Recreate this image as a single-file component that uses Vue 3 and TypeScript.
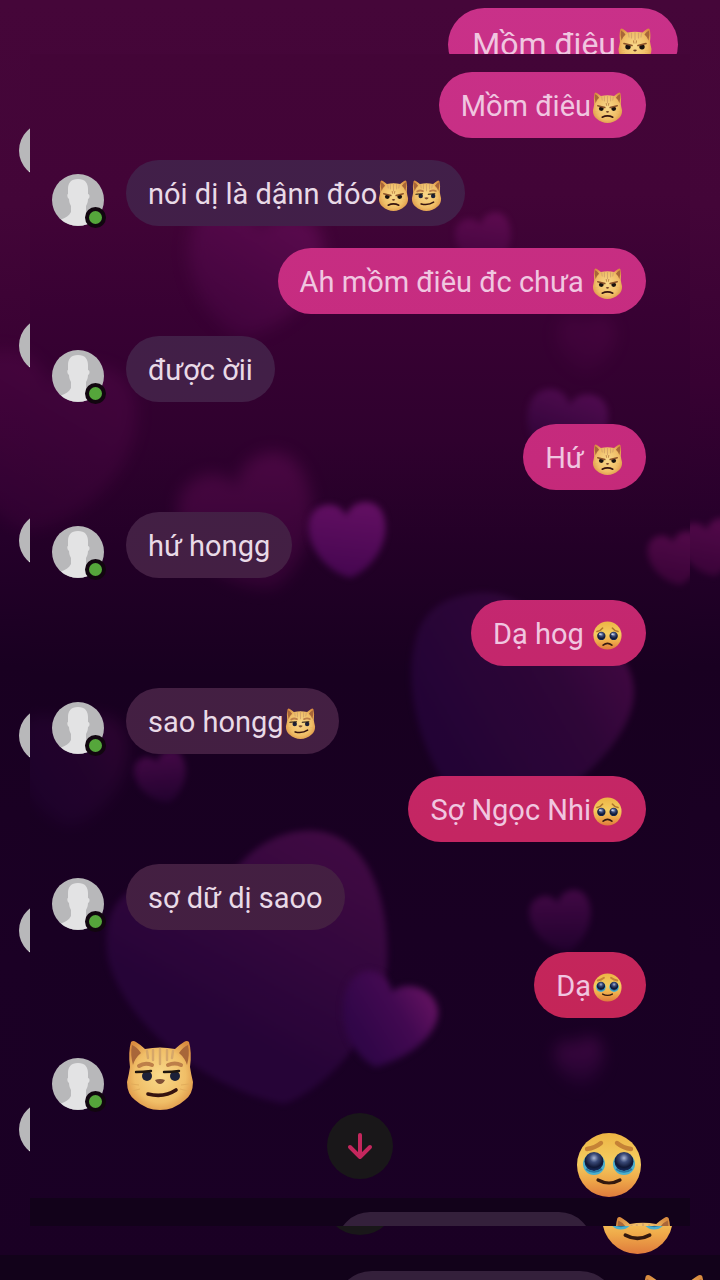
<script setup lang="ts">
type Face = 'angry' | 'smirk' | 'plead' | 'tears'

interface Message {
  id: number
  mine: boolean
  text: string
  faces: Face[]
}

interface Heart {
  x: number
  y: number
  size: number
  turn: number
  tone: 'wine' | 'plum' | 'violet' | 'bright'
  soft: 'near' | 'far'
  alpha: number
}

const contact = 'Ngọc Nhi'

const faceNames: Record<Face, string> = {
  angry: 'mèo giận',
  smirk: 'mèo cười nhếch',
  plead: 'mặt năn nỉ',
  tears: 'mặt rưng rưng',
}

const isRound = (f: Face): boolean => f === 'plead' || f === 'tears'

const messages: Message[] = [
  { id: 1, mine: true, text: 'Mồm điêu', faces: ['angry'] },
  { id: 2, mine: false, text: 'nói dị là dậnn đóo', faces: ['angry', 'smirk'] },
  { id: 3, mine: true, text: 'Ah mồm điêu đc chưa ', faces: ['angry'] },
  { id: 4, mine: false, text: 'được ờii', faces: [] },
  { id: 5, mine: true, text: 'Hứ ', faces: ['angry'] },
  { id: 6, mine: false, text: 'hứ hongg', faces: [] },
  { id: 7, mine: true, text: 'Dạ hog ', faces: ['plead'] },
  { id: 8, mine: false, text: 'sao hongg', faces: ['smirk'] },
  { id: 9, mine: true, text: 'Sợ Ngọc Nhi', faces: ['plead'] },
  { id: 10, mine: false, text: 'sợ dữ dị saoo', faces: [] },
  { id: 11, mine: true, text: 'Dạ', faces: ['tears'] },
]

const hearts: Heart[] = [
  { x: 222, y: 218, size: 140, turn: 10, tone: 'wine', soft: 'far', alpha: 0.7 },
  { x: 455, y: 188, size: 58, turn: -14, tone: 'wine', soft: 'near', alpha: 0.75 },
  { x: 556, y: 290, size: 60, turn: 0, tone: 'wine', soft: 'far', alpha: 0.3 },
  { x: 536, y: 376, size: 84, turn: 8, tone: 'plum', soft: 'near', alpha: 0.8 },
  { x: 10, y: 390, size: 190, turn: 10, tone: 'wine', soft: 'far', alpha: 0.3 },
  { x: 222, y: 472, size: 140, turn: -20, tone: 'wine', soft: 'far', alpha: 0.5 },
  { x: 318, y: 486, size: 80, turn: -4, tone: 'bright', soft: 'near', alpha: 1 },
  { x: 646, y: 505, size: 56, turn: -10, tone: 'wine', soft: 'near', alpha: 0.7 },
  { x: 132, y: 724, size: 54, turn: -16, tone: 'plum', soft: 'near', alpha: 0.7 },
  { x: 40, y: 716, size: 120, turn: 0, tone: 'violet', soft: 'far', alpha: 0.4 },
  { x: 532, y: 868, size: 64, turn: -12, tone: 'plum', soft: 'near', alpha: 0.65 },
  { x: 550, y: 1008, size: 50, turn: -10, tone: 'plum', soft: 'far', alpha: 0.6 },
]

const heartPlace = (h: Heart): string =>
  `translate(${h.x} ${h.y}) rotate(${h.turn}) scale(${h.size / 100}) translate(-50 -50)`

const olderAvatars = [1, 2, 3, 4, 5, 6]
</script>

<template>
  <div class="screen">
    <svg class="defs" width="0" height="0" aria-hidden="true">
      <defs>
        <radialGradient id="fur" cx="50%" cy="50%" r="60%">
          <stop offset="0" stop-color="#f9d98a" />
          <stop offset="0.65" stop-color="#f0be67" />
          <stop offset="1" stop-color="#d98c40" />
        </radialGradient>
        <linearGradient id="skin" x1="0" y1="0" x2="0" y2="1">
          <stop offset="0" stop-color="#edb444" />
          <stop offset="0.45" stop-color="#f4cd60" />
          <stop offset="0.72" stop-color="#efaa4a" />
          <stop offset="1" stop-color="#df7b3c" />
        </linearGradient>
        <radialGradient id="eye" cx="50%" cy="32%" r="65%">
          <stop offset="0" stop-color="#a9b6d4" />
          <stop offset="0.35" stop-color="#3a4a78" />
          <stop offset="0.75" stop-color="#0f1735" />
          <stop offset="1" stop-color="#162a5a" />
        </radialGradient>
        <linearGradient id="wine" x1="0.7" y1="0" x2="0.3" y2="1">
          <stop offset="0" stop-color="#650d57" />
          <stop offset="1" stop-color="#43053f" />
        </linearGradient>
        <linearGradient id="plum" x1="0.6" y1="0" x2="0.4" y2="1">
          <stop offset="0" stop-color="#560d56" />
          <stop offset="1" stop-color="#260334" />
        </linearGradient>
        <linearGradient id="violet" x1="1" y1="0.2" x2="0.1" y2="0.7">
          <stop offset="0" stop-color="#4c0a49" />
          <stop offset="0.4" stop-color="#32083c" />
          <stop offset="1" stop-color="#250439" />
        </linearGradient>
        <linearGradient id="bright" x1="0.6" y1="0" x2="0.4" y2="1">
          <stop offset="0" stop-color="#620f62" />
          <stop offset="1" stop-color="#450650" />
        </linearGradient>
        <linearGradient id="orchid" x1="1" y1="0.2" x2="0.2" y2="0.7">
          <stop offset="0" stop-color="#6a1464" />
          <stop offset="0.5" stop-color="#420951" />
          <stop offset="1" stop-color="#310648" />
        </linearGradient>
        <linearGradient id="lobe" x1="0.8" y1="0" x2="0.4" y2="0.7">
          <stop offset="0" stop-color="#450b47" />
          <stop offset="1" stop-color="#28053a" />
        </linearGradient>
        <filter id="near" x="-20%" y="-20%" width="140%" height="140%" color-interpolation-filters="sRGB">
          <feGaussianBlur stdDeviation="3" />
        </filter>
        <filter id="far" x="-30%" y="-30%" width="160%" height="160%" color-interpolation-filters="sRGB">
          <feGaussianBlur stdDeviation="8" />
        </filter>
        <path
          id="heart"
          d="M50 97C30 92 2 66 2 34C2 14 14 4 28 4C39 4 47 11 50 20C53 11 62 4 73 4C88 4 98 14 98 34C98 66 70 92 50 97Z"
        />
      </defs>

      <symbol id="cat" viewBox="0 0 68 70">
        <path
          d="M5 2Q7 0 10 2Q15 5 19 9Q34 6 49 9Q53 5 58 2Q61 0 63 2Q66 12 64 27Q65 34 67 42Q67 54 59 60Q48 70 34 70Q20 70 9 60Q1 54 1 42Q3 34 4 27Q2 12 5 2Z"
          fill="url(#fur)"
        />
        <path d="M6 5Q11 7 15 13Q9 18 7 25Q4 14 6 5ZM62 5Q57 7 53 13Q59 18 61 25Q64 14 62 5Z" fill="#a86639" />
        <path
          d="M21 11L22 18M27 10V20M34 9V24M41 10V20M47 11L46 18"
          stroke="#d6a769"
          stroke-width="2.4"
          stroke-linecap="round"
          fill="none"
        />
        <path d="M5 44L13 45M6 51L14 49M63 44L55 45M62 51L54 49" stroke="#e2ad5b" stroke-width="1" />
      </symbol>

      <symbol id="smirk" viewBox="0 0 68 70">
        <use href="#cat" width="68" height="70" />
        <path d="M13 26Q19 22 26 25M42 25Q49 22 55 25" stroke="#bd7f49" stroke-width="4" stroke-linecap="round" fill="none" />
        <ellipse cx="21" cy="36" rx="5" ry="5" fill="#1b2038" />
        <ellipse cx="49" cy="36" rx="5" ry="5" fill="#1b2038" />
        <path d="M10 32Q17 32 25 31M38 32Q46 32 53 31" stroke="#1f160f" stroke-width="2.4" stroke-linecap="round" fill="none" />
        <path d="M29 40Q34 38 39 40Q37 44 34 44Q31 44 29 40Z" fill="#805035" />
        <path d="M22 54Q38 58 50 50" stroke="#35130f" stroke-width="3.6" stroke-linecap="round" fill="none" />
      </symbol>

      <symbol id="angry" viewBox="0 0 68 70">
        <use href="#cat" width="68" height="70" />
        <ellipse cx="20" cy="38" rx="5.4" ry="4.8" fill="#17110f" />
        <ellipse cx="48" cy="38" rx="5.4" ry="4.8" fill="#17110f" />
        <path d="M12 31L28 35M56 31L40 35" stroke="#8a5129" stroke-width="3.4" stroke-linecap="round" />
        <path d="M31 25L32 31M37 25L36 31" stroke="#b5793f" stroke-width="1.8" />
        <path d="M30 44Q34 42 38 44Q36 47 34 47Q32 47 30 44Z" fill="#6e3e26" />
        <path d="M22 57Q34 51 46 57" stroke="#35130f" stroke-width="3.6" stroke-linecap="round" fill="none" />
      </symbol>

      <symbol id="plead" viewBox="0 0 66 66">
        <circle cx="33" cy="33" r="32" fill="url(#skin)" />
        <path d="M9 24Q17 23 22 16M57 24Q49 23 44 16" stroke="#b0762b" stroke-width="3.4" stroke-linecap="round" fill="none" />
        <circle cx="19" cy="34" r="9.5" fill="url(#eye)" />
        <circle cx="47" cy="34" r="9.5" fill="url(#eye)" />
        <circle cx="16" cy="30" r="2.4" fill="#c7d1e6" />
        <circle cx="44" cy="30" r="2.4" fill="#c7d1e6" />
        <path d="M23 55Q33 47 43 55" stroke="#381911" stroke-width="3.6" stroke-linecap="round" fill="none" />
      </symbol>

      <symbol id="tears" viewBox="0 0 66 66">
        <circle cx="33" cy="33" r="32" fill="url(#skin)" />
        <path d="M11 17Q19 16 25 11M55 17Q47 16 41 11" stroke="#c58236" stroke-width="4.4" stroke-linecap="round" fill="none" />
        <circle cx="18" cy="32" r="11" fill="#4bb0cd" />
        <circle cx="48" cy="32" r="11" fill="#4bb0cd" />
        <circle cx="18" cy="29.5" r="9.5" fill="url(#eye)" />
        <circle cx="48" cy="29.5" r="9.5" fill="url(#eye)" />
        <path d="M10 37Q18 43 26 37M40 37Q48 43 56 37" stroke="#2677a4" stroke-width="1.6" fill="none" />
        <path d="M22 48Q33 54 44 48" stroke="#33190f" stroke-width="3.2" stroke-linecap="round" fill="none" />
      </symbol>

      <symbol id="person" viewBox="0 0 52 52">
        <circle cx="26" cy="26" r="26" fill="#b8b8ba" />
        <path
          d="M26 5C19 5 16 9 16 15L16 20C15 20 15 24 17 25C17 28 18 30 19 32L19 38C17 42 13 44 9 45.5A26 26 0 0 0 43 45.5C38 44 35 42 34 38L34 32C35 30 36 28 36 25C38 24 38 20 36 20L36 15C36 9 33 5 26 5Z"
          fill="#e3e3e4"
        />
      </symbol>
    </svg>

    <div class="older" aria-hidden="true">
      <svg class="sky" viewBox="0 0 720 1280" preserveAspectRatio="xMidYMid slice">
        <g filter="url(#near)" opacity="0.7">
          <use href="#heart" fill="url(#wine)" transform="translate(710 548) rotate(-10) scale(0.6) translate(-50 -50)" />
        </g>
        <g filter="url(#far)" opacity="0.3">
          <use href="#heart" fill="url(#wine)" transform="translate(40 444) rotate(10) scale(1.9) translate(-50 -50)" />
        </g>
      </svg>
      <div class="older-top">
        <div class="bubble older-bubble">Mồm điêu<svg class="older-face"><use href="#angry" /></svg></div>
      </div>
      <div class="older-people">
        <svg v-for="n in olderAvatars" :key="n" class="older-avatar"><use href="#person" /></svg>
      </div>
      <div class="older-end">
        <span class="older-jump"></span>
        <svg class="older-sticker"><use href="#tears" /></svg>
      </div>
      <div class="dock older-dock">
        <span class="older-field"></span>
        <svg class="older-cat"><use href="#cat" /></svg>
      </div>
    </div>

    <main class="panel">
      <svg class="sky" viewBox="0 0 660 1172" preserveAspectRatio="xMidYMin slice" aria-hidden="true">
        <g v-for="(h, i) in hearts" :key="i" :filter="`url(#${h.soft})`" :opacity="h.alpha">
          <use href="#heart" :fill="`url(#${h.tone})`" :transform="heartPlace(h)" />
        </g>
        <path
          filter="url(#near)"
          opacity="0.85"
          fill="url(#violet)"
          d="M430 542C465 531 500 546 520 578C562 570 604 598 604 638C604 676 562 720 530 738C490 762 430 748 410 722C386 680 374 626 386 584C392 560 410 546 430 542Z"
        />
        <path
          filter="url(#near)"
          opacity="0.9"
          fill="url(#lobe)"
          d="M208 812C236 778 280 768 310 784C346 804 360 860 357 912C350 976 300 1032 255 1050C200 1042 100 986 78 906C70 858 90 828 140 826C170 820 192 826 208 812Z"
        />
        <path
          filter="url(#near)"
          fill="url(#orchid)"
          d="M338 917C350 917 360 926 362 938C374 926 404 932 408 956C410 976 386 1002 346 1013C330 1006 314 984 313 960C312 936 322 918 338 917Z"
        />
      </svg>

      <ul class="thread">
        <li v-for="m in messages" :key="m.id" class="row" :class="m.mine ? 'mine' : 'theirs'">
          <span v-if="!m.mine" class="avatar" role="img" :aria-label="contact">
            <svg class="portrait"><use href="#person" /></svg>
            <i class="online"></i>
          </span>
          <div class="bubble">{{ m.text }}<svg v-for="(f, i) in m.faces" :key="i" class="face" :class="{ round: isRound(f) }" role="img" :aria-label="faceNames[f]"><use :href="`#${f}`" /></svg></div>
        </li>
        <li class="row theirs">
          <span class="avatar" role="img" :aria-label="contact">
            <svg class="portrait"><use href="#person" /></svg>
            <i class="online"></i>
          </span>
          <svg class="sticker cat-sticker" role="img" :aria-label="faceNames.smirk"><use href="#smirk" /></svg>
        </li>
        <li class="row mine last">
          <svg class="sticker" role="img" :aria-label="faceNames.tears"><use href="#tears" /></svg>
        </li>
      </ul>

      <button class="jump" type="button" aria-label="Xuống tin mới nhất">
        <svg viewBox="0 0 66 66" aria-hidden="true">
          <path d="M33 22V44M23 34L33 44L43 34" />
        </svg>
      </button>

      <form class="dock" @submit.prevent>
        <input class="field" type="text" aria-label="Nhắn tin" />
        <button class="quick" type="button" aria-label="Gửi mèo">
          <svg><use href="#cat" /></svg>
        </button>
      </form>
    </main>
  </div>
</template>

<style>
body {
  margin: 0;
  background: #190021;
}
</style>

<style scoped>
.screen {
  position: relative;
  box-sizing: border-box;
  min-height: 100vh;
  padding: 54px 30px;
  overflow: hidden;
  font-family: Roboto, "Noto Sans", sans-serif;
}

.defs {
  position: absolute;
}

.sky {
  position: absolute;
  inset: 0;
  width: 100%;
  height: 100%;
}

.bubble {
  position: relative;
  box-sizing: border-box;
  padding: 17px 22px 15px;
  border-radius: 33px;
  background: linear-gradient(#411f4a, #421f47 30%, #431f43 45%, #441f40) fixed;
  color: #e9dae7;
  font-size: 29px;
  line-height: 34px;
  white-space: pre;
}

.mine .bubble,
.older-bubble {
  background: linear-gradient(#c93189, #c52a7c 36%, #c4276d 50%, #c42556 82%) fixed;
  color: #f0c6e0;
}

.face {
  width: 33px;
  height: 31px;
  vertical-align: -7px;
}

.round {
  height: 29px;
  vertical-align: -6px;
}

/* older conversation behind the panel */
.older {
  position: absolute;
  inset: 0;
  display: flex;
  flex-direction: column;
  overflow: hidden;
  background: linear-gradient(#450639, #430538 16%, #370132 30%, #25002a 42%, #190021 52%, #1b0025 75%, #1a0024);
}

.older-top {
  display: flex;
  justify-content: flex-end;
  padding: 8px 42px 0 0;
}

.older-bubble {
  padding: 18px 24px;
  border-radius: 37px;
  font-size: 32px;
  line-height: 37px;
}

.older-face {
  width: 38px;
  height: 35px;
  vertical-align: -8px;
}

.older-people {
  position: relative;
  display: flex;
  flex-direction: column;
  gap: 140px;
  padding: 42px 0 0 19px;
}

.older-avatar {
  width: 55px;
  height: 55px;
}

.older-avatar:last-child {
  margin-top: 4px;
}

.older-end {
  position: relative;
  display: flex;
  justify-content: flex-end;
  margin-top: auto;
  padding-right: 46px;
}

.older-jump {
  position: absolute;
  left: 50%;
  bottom: 20px;
  width: 74px;
  height: 74px;
  margin-left: -37px;
  border-radius: 50%;
  background: #191719;
}

.older-sticker {
  width: 73px;
  height: 73px;
}

.older-field {
  width: 282px;
  height: 74px;
  margin-right: 24px;
  border-radius: 37px;
  background: #34203b;
}

.older-cat {
  width: 66px;
  height: 68px;
  margin-top: 3px;
}

/* current conversation */
.panel {
  position: relative;
  background: linear-gradient(#430537, #420437 12%, #380133 22%, #2f012e 33%, #230027 42%, #180020 53%, #190023 75%, #1a0025);
}

.thread {
  position: relative;
  display: flex;
  flex-direction: column;
  gap: 22px;
  margin: 0;
  padding: 18px 44px 0 22px;
  list-style: none;
}

.row {
  display: flex;
  align-items: flex-end;
  gap: 22px;
}

.mine {
  justify-content: flex-end;
}

.last {
  padding-right: 4px;
}

.avatar {
  position: relative;
  width: 52px;
  height: 52px;
}

.portrait {
  display: block;
  width: 52px;
  height: 52px;
}

.online {
  position: absolute;
  right: -2px;
  bottom: -2px;
  width: 13px;
  height: 13px;
  border: 4px solid #11060f;
  border-radius: 50%;
  background: #55a63b;
}

.sticker {
  display: block;
  width: 66px;
  height: 66px;
}

.cat-sticker {
  width: 68px;
  height: 70px;
}

.jump {
  position: absolute;
  left: 50%;
  bottom: 47px;
  width: 66px;
  height: 66px;
  margin-left: -33px;
  padding: 0;
  border: 0;
  border-radius: 50%;
  background: #191719;
}

.jump svg {
  display: block;
  fill: none;
  stroke: #c4275d;
  stroke-width: 4;
  stroke-linecap: round;
  stroke-linejoin: round;
}

.dock {
  position: relative;
  display: flex;
  align-items: flex-start;
  justify-content: flex-end;
  box-sizing: border-box;
  height: 28px;
  padding: 14px 17px 0 0;
  overflow: hidden;
  background: #12021a;
}

.older-dock {
  flex: none;
  height: 25px;
  padding: 16px 13px 0 0;
}

.field {
  box-sizing: border-box;
  width: 255px;
  height: 66px;
  margin: 0 21px 0 0;
  padding: 0 22px;
  border: 0;
  border-radius: 33px;
  background: #34203b;
  color: #ecdcea;
  font: 29px Roboto, "Noto Sans", sans-serif;
}

.quick {
  width: 60px;
  height: 62px;
  margin: 4px 0 0;
  padding: 0;
  border: 0;
  background: none;
}

.quick svg {
  display: block;
  width: 60px;
  height: 62px;
}
</style>
